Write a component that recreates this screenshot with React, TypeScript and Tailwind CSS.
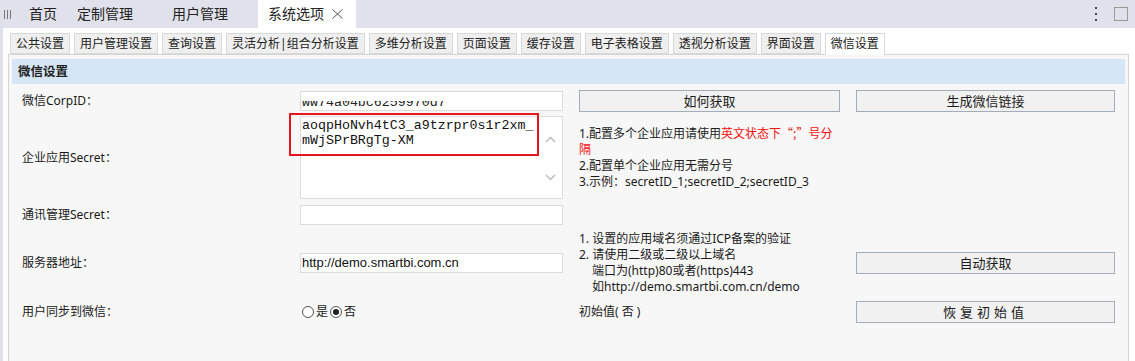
const subTabs = [
  '公共设置',
  '用户管理设置',
  '查询设置',
  '灵活分析|组合分析设置',
  '多维分析设置',
  '页面设置',
  '缓存设置',
  '电子表格设置',
  '透视分析设置',
  '界面设置',
  '微信设置',
];

function TopBar() {
  return (
    <div className="flex h-[28px] items-center bg-[#e1e1eb] text-[14px] leading-[20px] text-[#222]">
      <div className="flex w-[29px] pl-[4px]">
        <div className="flex h-[9px] gap-[2px]">
          <div className="w-px bg-[#777]" />
          <div className="w-px bg-[#777]" />
          <div className="w-px bg-[#777]" />
        </div>
      </div>
      <span>首页</span>
      <span className="ml-[20px]">定制管理</span>
      <span className="ml-[39px]">用户管理</span>
      <div className="ml-[30px] flex h-full items-center bg-white pl-[10px] pr-[13px]">
        <span>系统选项</span>
        <svg className="ml-[8px]" width="11" height="10" viewBox="0 0 11 10">
          <path d="M0.5 0.5L10.5 9.5M10.5 0.5L0.5 9.5" stroke="#555" strokeWidth="1" fill="none" />
        </svg>
      </div>
      <div className="ml-auto flex items-center">
        <div className="flex flex-col gap-[4px]">
          <div className="h-[2px] w-[2px] bg-[#444]" />
          <div className="h-[2px] w-[2px] bg-[#444]" />
          <div className="h-[2px] w-[2px] bg-[#444]" />
        </div>
        <div className="ml-[17px] mr-[7px] h-[14px] w-[14px] border border-[#9a9a9a]" />
      </div>
    </div>
  );
}

function Button({ label, wide }: { label: string; wide?: boolean }) {
  return (
    <div
      className={`flex h-[22px] items-center justify-center border border-[#a3adb9] bg-[#f1f1f1] text-[13px] leading-[18px] text-[#1a1a1a] ${
        wide ? 'tracking-[4px]' : ''
      }`}
    >
      {label}
    </div>
  );
}

function Input({ children }: { children?: React.ReactNode }) {
  return <div className="h-[20px] overflow-hidden border border-[#dcdcdc] bg-white">{children}</div>;
}

function Chevron({ up }: { up?: boolean }) {
  return (
    <svg width="11" height="7" viewBox="0 0 11 7">
      <path
        d={up ? 'M1 6L5.5 1.5L10 6' : 'M1 1L5.5 5.5L10 1'}
        stroke="#bdbdbd"
        strokeWidth="1.5"
        fill="none"
      />
    </svg>
  );
}

function Radio({ checked }: { checked?: boolean }) {
  return (
    <div className="flex h-[12px] w-[12px] items-center justify-center rounded-full border border-[#555] bg-white">
      {checked && <div className="h-[6px] w-[6px] rounded-full bg-[#222]" />}
    </div>
  );
}

export default function App() {
  return (
    <div className="h-[361px] w-[1135px] overflow-hidden bg-white font-['Noto_Sans','Noto_Sans_CJK_SC',sans-serif] text-[#1a1a1a]">
      <TopBar />
      <div className="flex h-[333px]">
        <div className="w-[3px] bg-[#e1e1eb]" />
        <div className="flex-1 pl-[5px] pr-[6px]">
          <div className="flex items-end gap-[4px] pl-[2px] pt-[5px]">
            {subTabs.map((tab) =>
              tab === '微信设置' ? (
                <div
                  key={tab}
                  className="relative z-10 -mb-px h-[22px] border border-b-0 border-[#d9d9d9] bg-white px-[5px] text-[12px] leading-[19px] text-[#222]"
                >
                  {tab}
                </div>
              ) : (
                <div
                  key={tab}
                  className="h-[21px] border border-[#d9d9d9] bg-[#efefef] px-[5px] text-[12px] leading-[19px] text-[#222]"
                >
                  {tab}
                </div>
              ),
            )}
          </div>

          <div className="h-[320px] border border-[#d4d4d4] bg-[#f7f7f7] px-[3px] pt-[4px]">
            <div className="h-[25px] bg-[#d6e6f6] pl-[6px] text-[12.5px] font-bold leading-[25px] text-[#222]">
              微信设置
            </div>

            <div className="ml-[10px] mt-[4px] grid grid-cols-[262px_263px_261px_259px] grid-rows-[26px_87px_28px_68px_30px] items-center gap-x-4 text-[12px] leading-[16px]">
              {/* row 1 */}
              <div>微信CorpID：</div>
              <Input>
                <div className="ml-[1px] mt-[9px] h-[8px] overflow-hidden">
                  <div className="-mt-[6px] font-['Liberation_Mono',monospace] text-[13.3px] leading-[15px] text-[#222]">
                    ww74a04bc6259970d7
                  </div>
                </div>
              </Input>
              <Button label="如何获取" />
              <Button label="生成微信链接" />

              {/* row 2 */}
              <div>企业应用Secret：</div>
              <div className="relative flex h-[83px] border border-[#dcdcdc] bg-white">
                <div className="flex-1 pl-[1px] pt-[1px] font-['Liberation_Mono',monospace] text-[13.3px] leading-[15px] text-[#111]">
                  <div>aoqpHoNvh4tC3_a9tzrpr0s1r2xm_</div>
                  <div>mWjSPrBRgTg-XM</div>
                </div>
                <div className="mr-[3px] flex w-[18px] flex-col items-center justify-between pb-[17px] pt-[19px]">
                  <Chevron up />
                  <Chevron />
                </div>
                <div className="absolute left-[-12px] top-[-4px] h-[43px] w-[250px] border-2 border-[#e8141b]" />
              </div>
              <div>
                <div>
                  1.配置多个企业应用请使用
                  <span className="text-[#f20d0d]">
                    英文状态下
                    <span className="font-['Noto_Sans_CJK_SC',sans-serif]">“;”</span>
                    号分
                  </span>
                </div>
                <div className="text-[#f20d0d]">隔</div>
                <div>2.配置单个企业应用无需分号</div>
                <div>3.示例：secretID_1;secretID_2;secretID_3</div>
              </div>
              <div />

              {/* row 3 */}
              <div>通讯管理Secret：</div>
              <Input />
              <div />
              <div />

              {/* row 4 */}
              <div>服务器地址：</div>
              <Input>
                <div className="pl-[1px] font-['Liberation_Sans',sans-serif] text-[13px] leading-[18px] text-[#111]">
                  http://demo.smartbi.com.cn
                </div>
              </Input>
              <div>
                <div>1. 设置的应用域名须通过ICP备案的验证</div>
                <div>2. 请使用二级或二级以上域名</div>
                <div className="pl-[13px]">端口为(http)80或者(https)443</div>
                <div className="pl-[13px]">如http://demo.smartbi.com.cn/demo</div>
              </div>
              <Button label="自动获取" />

              {/* row 5 */}
              <div>用户同步到微信：</div>
              <div className="flex items-center pl-[2px]">
                <Radio />
                <span className="ml-[2px]">是</span>
                <div className="ml-[2px]">
                  <Radio checked />
                </div>
                <span className="ml-[2px]">否</span>
              </div>
              <div>初始值( 否 )</div>
              <Button label="恢复初始值" wide />
            </div>
          </div>
        </div>
      </div>
    </div>
  );
}
